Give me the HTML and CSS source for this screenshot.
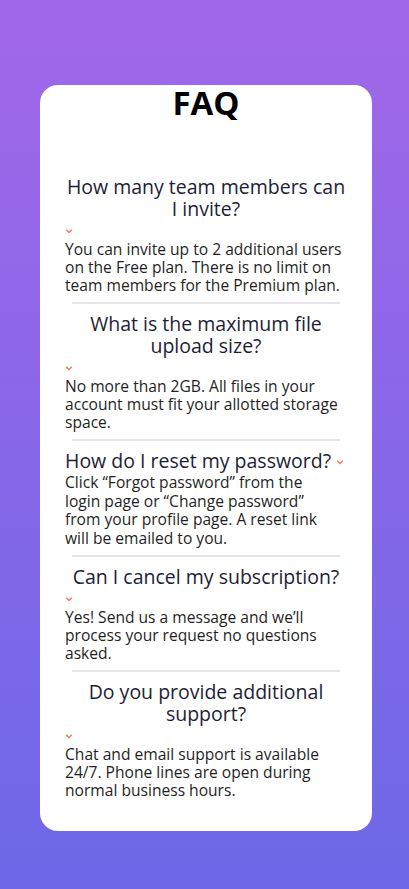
FILE: index.html
```html
<!DOCTYPE html>
<html lang="en">
<head>
<meta charset="utf-8">
<title>FAQ</title>
<link rel="stylesheet" href="styles.css">
</head>
<body>
<main class="card">
  <h1 class="title">FAQ</h1>
  <section class="faq">
    <div class="item">
      <h2 class="question">How many team members can I invite?</h2>
      <div class="chev-row"><svg class="chev" viewBox="0 0 10 7" width="8" height="5"><path d="M1 1l4 4 4-4" fill="none" stroke="#f47b56" stroke-width="2"/></svg></div>
      <p class="answer">You can invite up to 2 additional users on the Free plan. There is no limit on team members for the Premium plan.</p>
    </div>
    <hr class="divider">
    <div class="item">
      <h2 class="question">What is the maximum file upload size?</h2>
      <div class="chev-row"><svg class="chev" viewBox="0 0 10 7" width="8" height="5"><path d="M1 1l4 4 4-4" fill="none" stroke="#f47b56" stroke-width="2"/></svg></div>
      <p class="answer">No more than 2GB. All files in your account must fit your allotted storage space.</p>
    </div>
    <hr class="divider">
    <div class="item">
      <h2 class="question inline"><span>How do I reset my password?</span><svg class="chev chev-inline" viewBox="0 0 10 7" width="8" height="5"><path d="M1 1l4 4 4-4" fill="none" stroke="#f47b56" stroke-width="2"/></svg></h2>
      <p class="answer tight">Click “Forgot password” from the login page or “Change password” from your profile page. A reset link will be emailed to you.</p>
    </div>
    <hr class="divider">
    <div class="item">
      <h2 class="question">Can I cancel my subscription?</h2>
      <div class="chev-row"><svg class="chev" viewBox="0 0 10 7" width="8" height="5"><path d="M1 1l4 4 4-4" fill="none" stroke="#f47b56" stroke-width="2"/></svg></div>
      <p class="answer">Yes! Send us a message and we’ll process your request no questions asked.</p>
    </div>
    <hr class="divider">
    <div class="item">
      <h2 class="question">Do you provide additional support?</h2>
      <div class="chev-row"><svg class="chev" viewBox="0 0 10 7" width="8" height="5"><path d="M1 1l4 4 4-4" fill="none" stroke="#f47b56" stroke-width="2"/></svg></div>
      <p class="answer">Chat and email support is available 24/7. Phone lines are open during normal business hours.</p>
    </div>
  </section>
</main>
</body>
</html>
```
FILE: styles.css
```css
html, body {
  margin: 0;
  padding: 0;
}
body {
  min-height: 889px;
  background: linear-gradient(to bottom, #a267e9 0%, #6c68e7 100%);
  font-family: "Open Sans", "Noto Sans", sans-serif;
  overflow: hidden;
}
.card {
  width: 332px;
  margin: 85px 0 0 40px;
  box-sizing: border-box;
  padding: 0 25px 32px 25px;
  background: #ffffff;
  border-radius: 18px;
}
.title {
  margin: 0;
  font-size: 33px;
  line-height: 35px;
  font-weight: 700;
  color: #000;
  text-align: center;
}
.faq {
  margin-top: 56px;
}
.item {
  display: flex;
  flex-direction: column;
}
.question {
  margin: 0;
  font-size: 19.5px;
  line-height: 22px;
  font-weight: 400;
  color: #1d1e35;
  text-align: center;
}
.question.inline {
  display: flex;
  align-items: center;
  gap: 5px;
  white-space: nowrap;
}
.chev-row {
  height: 18px;
  padding-top: 9px;
  box-sizing: border-box;
}
.chev {
  display: block;
}
.chev-inline {
  flex: none;
  margin-top: 3px;
}
.answer {
  margin: 2px 0 0 0;
  font-size: 15.6px;
  line-height: 18px;
  color: #1f1f24;
}
.answer.tight {
  margin-top: 1px;
  line-height: 18.5px;
  max-width: 272px;
}
.divider {
  border: 0;
  height: 2px;
  background: #e5e4e9;
  margin: 8px 7px 9px 7px;
}
```
